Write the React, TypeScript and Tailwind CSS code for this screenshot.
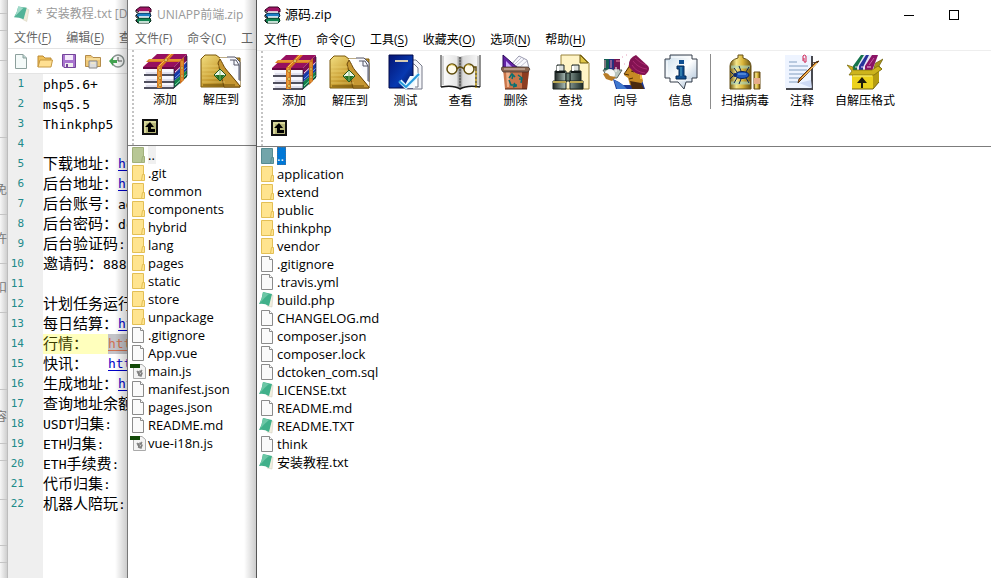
import React from 'react';
import clsx from 'clsx';

const uiFont = "font-['Open_Sans','Noto_Sans_CJK_SC',sans-serif]";
const codeFont = "font-['DejaVu_Sans_Mono','Noto_Sans_CJK_SC',monospace]";

/* ---------- toolbar icons ---------- */

const AddIcon = () => (
  <svg width="45" height="36" viewBox="0 0 45 36">
    <path d="M0 14 14 1H44L31 14Z" fill="#97105f" />
    <path d="M0 14H31V16H0Z" fill="#6c0745" />
    <path d="M31 14 44 1V9L31 21Z" fill="#7c0d55" />
    <path d="M31 21 44 9V17L31 28Z" fill="#1738a8" />
    <path d="M31 28 44 17V24L31 35Z" fill="#12804c" />
    <path d="M32 19 44 8" stroke="#e9dcf0" />
    <path d="M32 25 44 14" stroke="#78a8ed" />
    <path d="M32 32 44 21" stroke="#7fd6a4" />
    <path d="M2 16H31V21H2ZM2 23H31V28H2ZM2 30H31V34H2Z" fill="#f8f7fd" />
    <path d="M3 20H31M3 27H31M3 33H31" stroke="#c9c9dd" />
    <path d="M1 22H31M1 29H31M1 35H31" stroke="#17172b" strokeWidth="1.5" />
    <path d="M31 16V35L44 23V3" stroke="#151329" strokeWidth=".7" fill="none" />
    <path d="M6 6H39L36 9H3Z" fill="#d77b20" />
    <path d="M6 7H38" stroke="#f4ad43" />
    <path d="M37 8 41 4V27L37 31Z" fill="#c96d1c" />
    <path d="M39 8V28" stroke="#f4ad43" />
    <path d="M14 14 26 1H31L19 14V35H14Z" fill="#d77b20" />
    <path d="M16 13 28 1M16 14V35" stroke="#f9bc55" />
    <g fill="#fff171" stroke="#713811" strokeWidth=".5">
      <circle cx="17" cy="17" r="1.400" />
      <circle cx="17" cy="25" r="1.400" />
      <circle cx="17" cy="32" r="1.400" />
      <circle cx="23" cy="7" r="1.400" />
      <circle cx="39" cy="15" r="1.200" />
      <circle cx="39" cy="23" r="1.200" />
    </g>
  </svg>
);

const ExtractIcon = () => (
  <svg width="42" height="36" viewBox="0 0 42 36">
    <defs>
      <linearGradient id="extractGold" x2="1" y2="1">
        <stop stopColor="#f3df82" />
        <stop offset=".5" stopColor="#c99e32" />
        <stop offset="1" stopColor="#815c0b" />
      </linearGradient>
    </defs>
    <path d="M1 6 5 2H16L20 5H40V34H1Z" fill="url(#extractGold)" stroke="#79560b" />
    <path d="M20 5H34L40 12V33L19 8Z" fill="#fff" />
    <path d="M27 4H35L40 9V28M30 7H36L39 12V27M34 7V12H39" fill="#f8f9ff" stroke="#535466" />
    <path d="M20 6C25 14 22 12 30 21L40 33V34H24L18 10Z" fill="#c69732" stroke="#6b4608" />
    <path d="M2 13H19M2 17H22M2 21H15M2 25H17M2 29H25" stroke="#f0d777" opacity=".6" />
    <path d="M3 32H35" stroke="#6f5108" />
    <path d="M20 16 26 22 20 28 14 22Z" fill="#eef8e8" stroke="#26591a" />
    <path d="M15 22H25L20 28Z" fill="#237021" />
    <path d="M20 17V27" stroke="#84b877" />
  </svg>
);

const TestIcon = () => (
  <svg width="36" height="36" viewBox="0 0 36 36">
    <defs>
      <linearGradient id="testBlue" x2="1" y2="1">
        <stop stopColor="#041574" />
        <stop offset=".6" stopColor="#0739b1" />
        <stop offset="1" stopColor="#03104d" />
      </linearGradient>
    </defs>
    <path d="M22 6H28L34 12V35H17V29H22Z" fill="#f5f6fa" stroke="#777b89" />
    <path d="M23 10H26L30 14V33H18" fill="#fff" stroke="#777b89" />
    <path d="M1 1H25V34H1Z" fill="url(#testBlue)" stroke="#020b48" />
    <path d="M7 7H20" stroke="#d5cbb2" strokeWidth="2" />
    <path d="M22 22H27V34H18V29Z" fill="#f4fafe" />
    <path d="M12 27 18 33 31 20" fill="none" stroke="#d8f3ff" strokeWidth="4" />
    <path d="M11 27 18 33 31 20" fill="none" stroke="#2498db" strokeWidth="2" />
  </svg>
);

const ViewIcon = () => (
  <svg width="42" height="36" viewBox="0 0 42 36">
    <defs>
      <linearGradient id="viewPage">
        <stop stopColor="#fff" />
        <stop offset=".4" stopColor="#e6e6e6" />
        <stop offset=".49" stopColor="#777" />
        <stop offset=".56" stopColor="#dadada" />
        <stop offset="1" stopColor="#fafafa" />
      </linearGradient>
    </defs>
    <path d="M1 1Q14 0 20 3Q27 0 40 1V33Q27 31 21 35Q14 31 1 33Z" fill="url(#viewPage)" />
    <path d="M1 1V33M40 1V33" stroke="#222" />
    <path d="M3 2V31M38 2V31" stroke="#aaa" />
    <path d="M20 3V33" stroke="#444" strokeDasharray="2 1" />
    <path d="M1 33Q14 31 20 35Q27 31 40 33" stroke="#171717" strokeWidth="1.500" fill="none" />
    <g fill="#fffbea" stroke="#5e4b0b" strokeWidth="1.500">
      <circle cx="12" cy="15" r="5" />
      <circle cx="29" cy="15" r="5" />
      <path d="M17 15Q20 11 24 15M34 13H36V34" fill="none" />
    </g>
    <path d="M36 17V34" stroke="#d8b840" strokeWidth="1.500" strokeDasharray="2 2" />
    <path d="M8 13Q11 9 15 12M25 13Q27 9 31 12" stroke="#d5b844" fill="none" />
  </svg>
);

const DeleteIcon = () => (
  <svg width="30" height="36" viewBox="0 0 30 36">
    <path d="M9 12 18 2 26 6 28 14Z" fill="#f9f9ff" stroke="#9999ad" />
    <path d="M12 12 20 4M15 12 23 5M19 13 26 7" stroke="#c1c2d1" />
    <path d="M2 1 18 15H2Z" fill="#6422a6" stroke="#280755" />
    <path d="M5 7 11 13H5Z" fill="#cfadff" />
    <path d="M2 15H28L26 35H4Z" fill="#c9754a" />
    <path d="M21 17H28L26 35H21Z" fill="#8c3d20" />
    <path d="M5 17H9L8 33H6Z" fill="#eeb08a" />
    <path d="M1 13H27L29 15 27 18H2L0 15Z" fill="#8b6651" stroke="#3a2b28" strokeWidth=".7" />
    <path d="M3 15H24" stroke="#e0cabb" />
    <path d="M4 35H26" stroke="#4b2010" />
    <path d="M8 24 11 20 14 23M12 21 11 25M17 21 21 24 20 29M21 25 18 25M8 26 10 31 16 31M13 29 15 32 12 33" fill="none" stroke="#087073" strokeWidth="1.500" />
  </svg>
);

const FindIcon = () => (
  <svg width="38" height="36" viewBox="0 0 38 36">
    <defs>
      <linearGradient id="findBarrel">
        <stop stopColor="#202725" />
        <stop offset=".4" stopColor="#a4b8b1" />
        <stop offset="1" stopColor="#1d2c28" />
      </linearGradient>
    </defs>
    <path d="M9 1H29L37 9V35H9Z" fill="#fff4c6" stroke="#9a843c" />
    <path d="M28 1V9H36Z" fill="#e1c647" stroke="#6d5b13" />
    <g stroke="#192220">
      <path d="M5 11H12V19H5ZM20 11H27V19H20Z" fill="#dbe0dd" />
      <path d="M3 17H14V28H3ZM18 17H29V28H18Z" fill="url(#findBarrel)" />
      <path d="M1 27H14V35H1ZM18 27H31V35H18Z" fill="url(#findBarrel)" />
      <path d="M14 19H18V27H14Z" fill="#657c72" />
    </g>
    <path d="M1 28H14M18 28H31" stroke="#bba854" strokeWidth="2" />
    <path d="M4 18H13M19 18H28" stroke="#101716" strokeWidth="2" />
    <path d="M6 12V17M21 12V17" stroke="#fff" strokeWidth="2" />
  </svg>
);

const WizardIcon = () => (
  <svg width="48" height="36" viewBox="0 0 48 36">
    <path d="M2 5H7V18H2Z" fill="#135e53" />
    <path d="M7 5H12V18H7Z" fill="#23317f" />
    <path d="M12 5H18V18H12Z" fill="#701652" />
    <path d="M3 6V14M9 6V14M14 7H18" stroke="#ef8cad" />
    <path d="M1 16H20L15 24H6Z" fill="#b9c5be" stroke="#59645f" />
    <circle cx="8" cy="20" r="5" fill="#fff" opacity=".9" />
    <path d="M1 20Q5 17 8 22L14 23 10 27 4 25Z" fill="#b77c28" />
    <path d="M11 25Q16 27 21 31L28 31 40 26 43 35H14Z" fill="#1a3795" />
    <path d="M12 26Q20 29 25 35H15Z" fill="#3f78cf" />
    <path d="M27 11 38 15 41 27 36 34 28 31 26 24 22 21Z" fill="#c78b24" />
    <path d="M27 13 22 20 27 21M27 25 31 24M29 17 32 18" stroke="#523005" fill="none" />
    <path d="M28 27 39 29 42 35H30Z" fill="#4b2b0f" />
    <path d="M36 20 39 19V25" stroke="#f1c04b" strokeWidth="2" fill="none" />
    <path d="M27 13Q26 4 34 1L46 12Q49 16 43 21Q34 22 27 13Z" fill="#831352" />
    <path d="M30 11Q34 18 43 19M31 7Q36 14 45 15M33 4Q38 9 44 11" fill="none" stroke="#a92a70" />
    <path d="M14 13V18M12 16H17" stroke="#fff" />
    <path d="M20 3H21M24 1H25M22 10H23" stroke="#e59ab8" />
  </svg>
);

const InfoIcon = () => (
  <svg width="34" height="36" viewBox="0 0 34 36">
    <defs>
      <linearGradient id="infoFill" x2="1" y2="1">
        <stop stopColor="#c9dcea" />
        <stop offset=".5" stopColor="#fff" />
        <stop offset="1" stopColor="#9bb5cf" />
      </linearGradient>
    </defs>
    <path d="M6 1H28V5H33V24H28V28H22L20 35 14 28H6V24H1V5H6Z" fill="url(#infoFill)" stroke="#363f4b" />
    <path d="M7 3H26M3 7V22M8 26H27" stroke="#fff" />
    <path d="M13 12H20V22H22V25H12V22H15V15H13V12Z" fill="#115092" stroke="#052b56" />
    <path d="M15 6H20V10H15Z" fill="#115092" />
    <path d="M17 13V22" stroke="#4fa9c6" />
  </svg>
);

const VirusIcon = () => (
  <svg width="32" height="36" viewBox="0 0 32 36">
    <defs>
      <linearGradient id="virusTank">
        <stop stopColor="#715912" />
        <stop offset=".3" stopColor="#f5e68c" />
        <stop offset=".6" stopColor="#dab53b" />
        <stop offset="1" stopColor="#675110" />
      </linearGradient>
    </defs>
    <path d="M9 1H14V4Q22 6 22 12V35H1V12Q1 6 9 4Z" fill="url(#virusTank)" stroke="#67521a" />
    <path d="M2 13H21M2 29H21" stroke="#a9dccb" strokeWidth="3" opacity=".6" />
    <path d="M25 18H31V35H25Z" fill="url(#virusTank)" stroke="#6b4e18" />
    <path d="M25 24H31V30H25Z" fill="#e7ac8b" />
    <ellipse cx="13" cy="21" rx="7" ry="3.500" fill="#1f58bb" stroke="#081f5c" />
    <circle cx="6" cy="21" r="2" fill="#112c6c" />
    <path d="M8 18 5 14M12 17 10 12M17 18 20 13M8 24 5 29M12 25 10 30M17 24 20 29M4 20 1 17M4 22 1 25" stroke="#10254f" />
    <path d="M9 20H17" stroke="#7eb2ee" />
  </svg>
);

const CommentIcon = () => (
  <svg width="36" height="36" viewBox="0 0 36 36">
    <path d="M1 1H28V34H1Z" fill="#eef4ff" />
    <path d="M28 2V35H2" fill="none" stroke="#47484e" strokeWidth="2" />
    <path d="M5 8H13M5 12H24M5 16H23M5 20H21M5 24H18M5 28H14" stroke="#829ec0" />
    <path d="M15 29 28 34 27 26Z" fill="#cedaf4" />
    <path d="M19 7V2Q20 0 22 2V8Q20 9 20 7V4" fill="none" stroke="#d12553" />
    <path d="M35 7 18 25 14 29 15 25 32 8Z" fill="#d58627" stroke="#5c3412" />
    <path d="M33 9 18 24" stroke="#f7c568" />
    <path d="M28 13V9L34 8" stroke="#49331d" fill="none" />
  </svg>
);

const SfxIcon = () => (
  <svg width="36" height="36" viewBox="0 0 36 36">
    <path d="M27 10 36 5 32 12 35 15 27 20Z" fill="#a8951a" stroke="#6c5d0c" strokeWidth=".7" />
    <path d="M6 18V12L14 1H31L25 18Z" fill="#e6e5f5" />
    <path d="M6 17V12L14 1H17L10 13V17Z" fill="#15764c" />
    <path d="M12 17V12L19 1H22L16 13V17Z" fill="#27349b" />
    <path d="M18 17V12L25 1H31L25 17Z" fill="#8b1466" />
    <path d="M8 13H10M14 13H16M20 13H24" stroke="#f2c8e4" />
    <path d="M27 4 22 11" stroke="#c95ba7" />
    <path d="M5 20H26V35H5Z" fill="#ecd21c" />
    <path d="M26 20 32 12V28L26 35Z" fill="#b59c12" />
    <path d="M5 35H26L32 28" fill="none" stroke="#746511" />
    <path d="M0 11 6 13V16H25L31 12 35 15 27 21H2L5 17Z" fill="#cdb41c" stroke="#76650c" strokeWidth=".7" />
    <path d="M6 22H25" stroke="#f8ee76" />
    <path d="M14 34V29H10L15 23 20 29H16V34Z" fill="#1f1b0b" />
  </svg>
);

const UpIcon = () => (
  <svg width="16" height="16" viewBox="0 0 16 16">
    <path d="M1 1H15V15H1Z" fill="#d8d79b" stroke="#111" strokeWidth="2" />
    <path d="M4 4H14V14H4Z" fill="#b5b578" />
    <path d="M8 3 3 8H6V13H13V10H9V8H12Z" fill="#000" />
  </svg>
);

const BooksIcon = () => (
  <svg width="17" height="18" viewBox="0 0 17 18">
    <path d="M1 4 5 1H14L16 3V6H4Z" fill="#a01464" stroke="#370425" />
    <path d="M1 9 4 7H15L16 10 14 12H4Z" fill="#1d7fc4" stroke="#08223c" />
    <path d="M1 14 4 12H15L16 15 14 17H3Z" fill="#138452" stroke="#052b1a" />
    <path d="M4 6H14M4 11H14M4 16H14" stroke="#fff" strokeWidth="1.500" />
    <path d="M1 4V6L3 7M1 9V11L3 12M1 14V15L3 17" stroke="#111" fill="none" />
  </svg>
);

/* ---------- file list icons ---------- */

type FileKind = 'up' | 'upSelected' | 'folder' | 'file' | 'text' | 'script';

const FileIcon = ({ kind }: { kind: FileKind }) => {
  if (kind === 'file') {
    return (
      <svg width="16" height="16" viewBox="0 0 16 16">
        <path d="M2.500 .5H10.500L13.500 3.500V15.500H2.500Z" fill="#fafafa" stroke="#8b8b8b" />
        <path d="M10.500 .5V3.500H13.500" fill="#fff" stroke="#8b8b8b" />
      </svg>
    );
  }
  if (kind === 'text') {
    return (
      <svg width="16" height="16" viewBox="0 0 16 16">
        <path d="M12 3 14 3 13 15 8 14Z" fill="#f2efe0" stroke="#ccc9b8" strokeWidth=".5" />
        <path d="M4 0 13 2 10 14Q5 11 0 12Q3 7 4 0Z" fill="#40b08a" />
        <path d="M4 0 10 2Q5 6 1 11Q3 7 4 0Z" fill="#6cc7a6" />
      </svg>
    );
  }
  if (kind === 'script') {
    return (
      <svg width="16" height="16" viewBox="0 0 16 16">
        <path d="M3.500 1.500H12L15.500 4.500V15.500H3.500Z" fill="#f4f4f4" stroke="#aaa" />
        <path d="M0 1H10V5H0Z" fill="#124a08" />
        <path d="M7 8 9 11 12 7M8 12 11 13 12 10" fill="none" stroke="#888" strokeWidth="1.500" />
        <circle cx="10" cy="10" r="2" fill="none" stroke="#777" />
      </svg>
    );
  }
  const fill = kind === 'folder' ? '#ffe48f' : kind === 'up' ? '#b8c795' : '#72a5aa';
  const edge = kind === 'folder' ? '#e3bf55' : kind === 'up' ? '#a1b07a' : '#568b91';
  return (
    <svg width="16" height="16" viewBox="0 0 16 16">
      <path d="M2.500 .5H13.500V15.500H2.500Z" fill={fill} stroke={edge} />
      <path d="M12.500 9.500H14.500V15.500H11.500Z" fill={fill} stroke={edge} />
    </svg>
  );
};

/* ---------- archive window ---------- */

type Tool = { label: string; icon: React.ReactNode; width: string };
type Entry = [string, FileKind];
type MenuItem = [string, string?];

const mainMenu: MenuItem[] = [
  ['文件', 'F'],
  ['命令', 'C'],
  ['工具', 'S'],
  ['收藏夹', 'O'],
  ['选项', 'N'],
  ['帮助', 'H'],
];

const uniappMenu: MenuItem[] = [['文件', 'F'], ['命令', 'C'], ['工']];
const editorMenu: MenuItem[] = [['文件', 'F'], ['编辑', 'E'], ['查']];

const mainTools: Tool[] = [
  { label: '添加', icon: <AddIcon />, width: 'w-14' },
  { label: '解压到', icon: <ExtractIcon />, width: 'w-14' },
  { label: '测试', icon: <TestIcon />, width: 'w-[55px]' },
  { label: '查看', icon: <ViewIcon />, width: 'w-[55px]' },
  { label: '删除', icon: <DeleteIcon />, width: 'w-[55px]' },
  { label: '查找', icon: <FindIcon />, width: 'w-[55px]' },
  { label: '向导', icon: <WizardIcon />, width: 'w-[55px]' },
  { label: '信息', icon: <InfoIcon />, width: 'w-[55px]' },
];

const extraTools: Tool[] = [
  { label: '扫描病毒', icon: <VirusIcon />, width: 'w-[60px]' },
  { label: '注释', icon: <CommentIcon />, width: 'w-[54px]' },
  { label: '自解压格式', icon: <SfxIcon />, width: 'w-[72px]' },
];

const sourceEntries: Entry[] = [
  ['..', 'upSelected'],
  ['application', 'folder'],
  ['extend', 'folder'],
  ['public', 'folder'],
  ['thinkphp', 'folder'],
  ['vendor', 'folder'],
  ['.gitignore', 'file'],
  ['.travis.yml', 'file'],
  ['build.php', 'text'],
  ['CHANGELOG.md', 'file'],
  ['composer.json', 'file'],
  ['composer.lock', 'file'],
  ['dctoken_com.sql', 'file'],
  ['LICENSE.txt', 'text'],
  ['README.md', 'file'],
  ['README.TXT', 'text'],
  ['think', 'file'],
  ['安装教程.txt', 'text'],
];

const uniappEntries: Entry[] = [
  ['..', 'up'],
  ['.git', 'folder'],
  ['common', 'folder'],
  ['components', 'folder'],
  ['hybrid', 'folder'],
  ['lang', 'folder'],
  ['pages', 'folder'],
  ['static', 'folder'],
  ['store', 'folder'],
  ['unpackage', 'folder'],
  ['.gitignore', 'file'],
  ['App.vue', 'file'],
  ['main.js', 'script'],
  ['manifest.json', 'file'],
  ['pages.json', 'file'],
  ['README.md', 'file'],
  ['vue-i18n.js', 'script'],
];

const ToolButton = ({ label, icon, width }: Tool) => (
  <button className={clsx('flex shrink-0 flex-col items-center whitespace-nowrap', width)}>
    <span className="flex h-9 items-end">{icon}</span>
    <span className="mt-[3px] text-xs leading-4">{label}</span>
  </button>
);

const ArchiveToolbar = ({ tools, extra = [] }: { tools: Tool[]; extra?: Tool[] }) => (
  <div className="flex h-24 border-t border-[#eeeeee] pl-1">
    <div className="w-0 shrink-0 border-l-2 border-dotted border-[#c4c4c4]" />
    <div className="min-w-0 pt-[3px] pl-[3px]">
      <div className="flex">
        {tools.map((tool) => <ToolButton key={tool.label} {...tool} />)}
        {extra.length > 0 && <div className="mr-1 ml-[2px] w-px shrink-0 bg-[#8c8c8c]" />}
        {extra.map((tool) => <ToolButton key={tool.label} {...tool} />)}
      </div>
      <button className="mt-[11px] ml-[5px] block" aria-label="向上">
        <UpIcon />
      </button>
    </div>
  </div>
);

const FileList = ({ entries }: { entries: Entry[] }) => (
  <ul className="flex-1 border-t border-[#7c7c7c] pl-[2px] text-[13px] leading-[18px]">
    {entries.map(([name, kind]) => (
      <li key={name} className="flex h-[18px] items-center gap-[2px] whitespace-nowrap">
        <FileIcon kind={kind} />
        <span
          className={clsx(
            kind === 'up' && 'bg-[#f0f0f0] pr-px',
            kind === 'upSelected' && 'bg-[#0078d7] pr-[2px] text-white outline-1 -outline-offset-1 outline-dotted outline-[#4a6f94]'
          )}
        >
          {name}
        </span>
      </li>
    ))}
  </ul>
);

const MenuBar = ({ items, underline }: { items: MenuItem[]; underline: boolean }) => (
  <nav className="flex flex-1 items-center gap-[15px] text-xs whitespace-nowrap">
    {items.map(([text, key]) => (
      <button key={text} className="shrink-0">
        {text}
        {key && <>(<span className={clsx(underline && 'underline underline-offset-2')}>{key}</span>)</>}
      </button>
    ))}
  </nav>
);

/* ---------- text editor ---------- */

type CodeLine = { text: string; link?: string; tab?: boolean; active?: boolean };

const codeLines: CodeLine[] = [
  { text: 'php5.6+' },
  { text: 'msq5.5' },
  { text: 'Thinkphp5' },
  { text: '' },
  { text: '下载地址：', link: 'ht' },
  { text: '后台地址：', link: 'ht' },
  { text: '后台账号：ad' },
  { text: '后台密码：dc' },
  { text: '后台验证码:' },
  { text: '邀请码：8888' },
  { text: '' },
  { text: '计划任务运行' },
  { text: '每日结算：', link: 'ht' },
  { text: '行情：', link: 'htt', tab: true, active: true },
  { text: '快讯：', link: 'htt', tab: true },
  { text: '生成地址：', link: 'ht' },
  { text: '查询地址余额' },
  { text: 'USDT归集:' },
  { text: 'ETH归集:' },
  { text: 'ETH手续费:' },
  { text: '代币归集:' },
  { text: '机器人陪玩:' },
];

// Latin runs are set a little smaller than the Chinese around them
const MixedText = ({ text }: { text: string }) => (
  <>
    {text.split(/([\x20-\x7e]+)/).filter(Boolean).map((run, i) => (
      <span key={i} className={/^[\x20-\x7e]/.test(run) ? 'text-[13px]' : 'text-[15px]'}>{run}</span>
    ))}
  </>
);

const Editor = () => (
  <section className="relative flex w-[120px] shrink-0 flex-col overflow-hidden border-l border-[#bdbdbd] bg-white">
    <header className="flex h-7 shrink-0 items-center gap-[5px] pl-[6px] text-xs whitespace-nowrap text-[#999]">
      <svg className="shrink-0" width="17" height="18" viewBox="0 0 16 16">
        <path d="M10 2 14 4 12 15 8 13Z" fill="#efecd9" stroke="#d5d0b7" strokeWidth=".5" />
        <path d="M4 1 12 2 9 13Q5 11 0 11Q3 7 4 1Z" fill="#53b397" />
        <path d="M4 1 9 2Q5 6 1 10Q3 6 4 1Z" fill="#a0dac9" />
      </svg>
      <h1>* 安装教程.txt [D</h1>
    </header>
    <div className="flex h-5 shrink-0 pl-[6px] text-[#666]">
      <MenuBar items={editorMenu} underline />
    </div>
    <div className="flex h-[26px] shrink-0 items-center gap-2 border-y border-[#e4e4e4] pl-[5px]">
      <button className="shrink-0" aria-label="新建">
        <svg width="16" height="16" viewBox="0 0 16 16">
          <path d="M2.500 1.500H10L13.500 5V15.500H2.500Z" fill="#f4faf9" stroke="#8da09d" />
          <path d="M10 1.500V5H13.500" fill="#b8d5d0" stroke="#8da09d" />
        </svg>
      </button>
      <button className="shrink-0" aria-label="打开">
        <svg width="16" height="16" viewBox="0 0 16 16">
          <path d="M1 14V3H6L8 5H14V8" fill="#efc15b" stroke="#bd8a32" />
          <path d="M3 7H15.500L14 14H1Z" fill="#ffdf91" stroke="#c59843" />
        </svg>
      </button>
      <button className="shrink-0" aria-label="保存">
        <svg width="16" height="16" viewBox="0 0 16 16">
          <path d="M1.500 1.500H14.500V14.500H3L1.500 13Z" fill="#a874ce" stroke="#74459a" />
          <path d="M4 2H12V7H4Z" fill="#f4eafb" />
          <path d="M4 10H12V14H4Z" fill="#eee" />
          <path d="M6 11V14" stroke="#754698" strokeWidth="2" />
        </svg>
      </button>
      <button className="shrink-0" aria-label="另存为">
        <svg width="16" height="16" viewBox="0 0 16 16">
          <path d="M.5 13.500V2.500H6L8 4.500H15.500V13.500Z" fill="#efc978" stroke="#b48c4b" />
          <path d="M4 8H12V15H4Z" fill="#ddd" stroke="#888" />
          <path d="M6 10H10M1 6H15" stroke="#fff0bd" />
        </svg>
      </button>
      <button className="shrink-0" aria-label="历史">
        <svg width="16" height="16" viewBox="0 0 16 16">
          <circle cx="9" cy="8" r="6" fill="#f6f8f7" stroke="#8b9492" strokeWidth="1.500" />
          <path d="M9 4V8H13" fill="none" stroke="#555" />
          <path d="M0 8 4 4V7H8V10H4V13Z" fill="#42a350" />
        </svg>
      </button>
    </div>
    <ol className={clsx('flex-1 bg-[linear-gradient(to_right,#efefef_35px,#fff_35px)] whitespace-nowrap', codeFont)}>
      {codeLines.map((line, i) => (
        <li key={i} className="flex h-5 items-center leading-5">
          <span className="w-4 shrink-0 text-right text-[11px] text-[#218a8a]">{i + 1}</span>
          <span className={clsx('ml-[19px] flex shrink-0 items-center', line.active && 'bg-[#ffffbd] text-[#3c3c00]')}>
            <span className={clsx(line.tab ? 'w-[65px]' : 'w-auto')}>
              <MixedText text={line.text} />
            </span>
            {line.link && (
              <a
                href="#"
                className={clsx('text-[13px] underline underline-offset-2', line.active ? 'bg-[#c3c3c8] text-[#cf7050]' : 'text-[#0000c8]')}
              >
                {line.link}
              </a>
            )}
          </span>
        </li>
      ))}
    </ol>
    <div className="pointer-events-none absolute inset-y-0 right-0 w-3 bg-linear-to-r from-transparent to-black/20" />
  </section>
);

/* ---------- page strip left of the editor ---------- */

const stripCells = [
  { height: 'h-[14px]' },
  { height: 'h-[17px]' },
  { height: 'h-[30px]' },
  { height: 'h-[77px]' },
  { height: 'h-[77px] pt-7', text: '免' },
  { height: 'h-[49px]', text: '许' },
  { height: 'h-[49px]', text: '扣' },
  { height: 'h-[77px]' },
  { height: 'h-[54px]', text: '容' },
  { height: 'h-[17px]' },
  { height: 'h-[39px]' },
  { height: 'h-[46px]' },
  { height: 'h-[17px]' },
];

const BackgroundStrip = () => (
  <aside className="w-[7px] shrink-0 overflow-hidden bg-linear-to-r from-[#f7f7f7] to-[#cfcfcf] text-xs text-[#777]">
    {stripCells.map((cell, i) => (
      <div key={i} className={clsx('flex items-center justify-end border-b border-[#c4c4c4]', cell.height)}>
        {cell.text}
      </div>
    ))}
  </aside>
);

const App: React.FC = () => {
  return (
    <div className={clsx('flex min-h-screen overflow-hidden bg-white text-black', uiFont)}>
      <BackgroundStrip />
      <Editor />

      <section className="relative flex w-[129px] shrink-0 flex-col overflow-hidden border-l border-[#777] bg-white">
        <header className="flex h-[29px] shrink-0 items-center gap-[5px] pl-[7px] text-xs whitespace-nowrap text-[#999]">
          <span className="shrink-0"><BooksIcon /></span>
          <h2>UNIAPP前端.zip</h2>
        </header>
        <div className="flex h-5 shrink-0 pl-[7px] text-[#666]">
          <MenuBar items={uniappMenu} underline={false} />
        </div>
        <ArchiveToolbar tools={mainTools.slice(0, 2)} />
        <FileList entries={uniappEntries} />
        <div className="pointer-events-none absolute inset-y-0 right-0 w-3 bg-linear-to-r from-transparent to-black/20" />
      </section>

      <main className="flex min-w-0 flex-1 flex-col overflow-hidden border-l border-[#555] bg-white">
        <header className="flex h-[30px] shrink-0 items-center gap-1 pl-[7px] text-[13px]">
          <BooksIcon />
          <h2>源码.zip</h2>
          <div className="ml-auto flex pr-[15px]">
            <button className="flex h-7 w-[45px] items-center justify-center" aria-label="最小化">
              <span className="h-px w-[10px] bg-black" />
            </button>
            <button className="flex h-7 w-[45px] items-center justify-center" aria-label="最大化">
              <span className="size-[10px] border border-black" />
            </button>
          </div>
        </header>
        <div className="flex h-5 shrink-0 pl-[7px]">
          <MenuBar items={mainMenu} underline />
        </div>
        <ArchiveToolbar tools={mainTools} extra={extraTools} />
        <FileList entries={sourceEntries} />
      </main>
    </div>
  );
};

export default App;
